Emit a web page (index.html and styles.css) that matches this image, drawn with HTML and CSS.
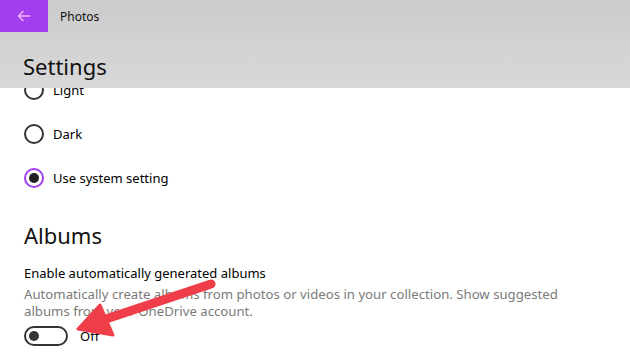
FILE: index.html
```html
<!DOCTYPE html>
<html>
<head>
<meta charset="utf-8">
<link rel="stylesheet" href="styles.css">
</head>
<body>
<div class="app">
  <header class="header">
    <div class="titlebar">
      <button class="back" aria-label="Back">
        <svg width="16" height="16" viewBox="0 0 16 16"><path d="M14 8H2.5M7.5 3L2.5 8l5 5" fill="none" stroke="#f5b8ff" stroke-width="1.3"/></svg>
      </button>
      <span class="apptitle">Photos</span>
    </div>
    <h1 class="pagetitle">Settings</h1>
  </header>
  <main class="content">
    <div class="radio-group">
      <label class="radio"><span class="circle"></span><span>Light</span></label>
      <label class="radio"><span class="circle"></span><span>Dark</span></label>
      <label class="radio"><span class="circle checked"></span><span>Use system setting</span></label>
    </div>
    <h2 class="section">Albums</h2>
    <div class="setting-title">Enable automatically generated albums</div>
    <p class="desc">Automatically create albums from photos or videos in your collection. Show suggested albums from your OneDrive account.</p>
    <div class="toggle-row">
      <span class="toggle"><span class="knob"></span></span>
      <span class="toggle-label">Off</span>
    </div>
  </main>
  <svg class="arrow" width="630" height="362" viewBox="0 0 630 362">
    <line x1="211" y1="284" x2="100" y2="321" stroke="#ef3e4a" stroke-width="9" stroke-linecap="round"/>
    <polygon points="78,329 100,305 113,335" fill="#ef3e4a" stroke="#ef3e4a" stroke-width="3" stroke-linejoin="round"/>
  </svg>
</div>
</body>
</html>
```
FILE: styles.css
```css
* { box-sizing: border-box; }
html, body { margin: 0; padding: 0; }
body {
  width: 630px;
  height: 362px;
  overflow: hidden;
  background: #fff;
  font-family: "Noto Sans", "Open Sans", sans-serif;
  color: #000;
}
.app {
  position: relative;
  width: 630px;
  height: 362px;
  overflow: hidden;
  display: flex;
  flex-direction: column;
}
.header {
  height: 88px;
  flex: none;
  background: linear-gradient(180deg, #cbcbcb 0%, #d2d2d2 50%, #d8d8d8 100%);
  position: relative;
  z-index: 2;
}
.titlebar {
  display: flex;
  align-items: center;
  height: 32px;
}
.back {
  width: 48px;
  height: 32px;
  border: 0;
  padding: 0;
  background: #a43ff0;
  display: flex;
  align-items: center;
  justify-content: center;
}
.apptitle {
  margin-left: 12px;
  font-size: 12px;
  color: #111;
}
.pagetitle {
  margin: 18px 0 0 23px;
  font-weight: 400;
  font-size: 22px;
  line-height: 32px;
  color: #111;
}
.content {
  flex: 1;
  padding-left: 24px;
}
.radio-group {
  margin-top: -8px;
  display: flex;
  flex-direction: column;
  gap: 24px;
}
.radio {
  display: flex;
  align-items: center;
  height: 20px;
  font-size: 13px;
  color: #000;
}
.circle {
  width: 20px;
  height: 20px;
  border: 2px solid #333;
  border-radius: 50%;
  margin-right: 9px;
  display: flex;
  align-items: center;
  justify-content: center;
}
.circle.checked { border-color: #a43ff0; }
.circle.checked::after {
  content: "";
  width: 10px;
  height: 10px;
  border-radius: 50%;
  background: #222;
}
.section {
  margin: 31px 0 0 0;
  font-weight: 400;
  font-size: 22px;
  line-height: 32px;
  color: #111;
}
.setting-title {
  margin-top: 13px;
  font-size: 13px;
  line-height: 18px;
}
.desc {
  margin: 4px 0 0 0;
  font-size: 13.2px;
  line-height: 17px;
  color: #7a7a7a;
  width: 560px;
}
.toggle-row {
  display: flex;
  align-items: center;
  margin-top: 6px;
}
.toggle {
  width: 44px;
  height: 20px;
  border: 2px solid #333;
  border-radius: 10px;
  display: flex;
  align-items: center;
  padding-left: 3px;
}
.knob {
  width: 10px;
  height: 10px;
  border-radius: 50%;
  background: #333;
}
.toggle-label {
  margin-left: 12px;
  font-size: 13px;
}
.arrow {
  position: absolute;
  left: 0;
  top: 0;
  z-index: 3;
  pointer-events: none;
}
```
